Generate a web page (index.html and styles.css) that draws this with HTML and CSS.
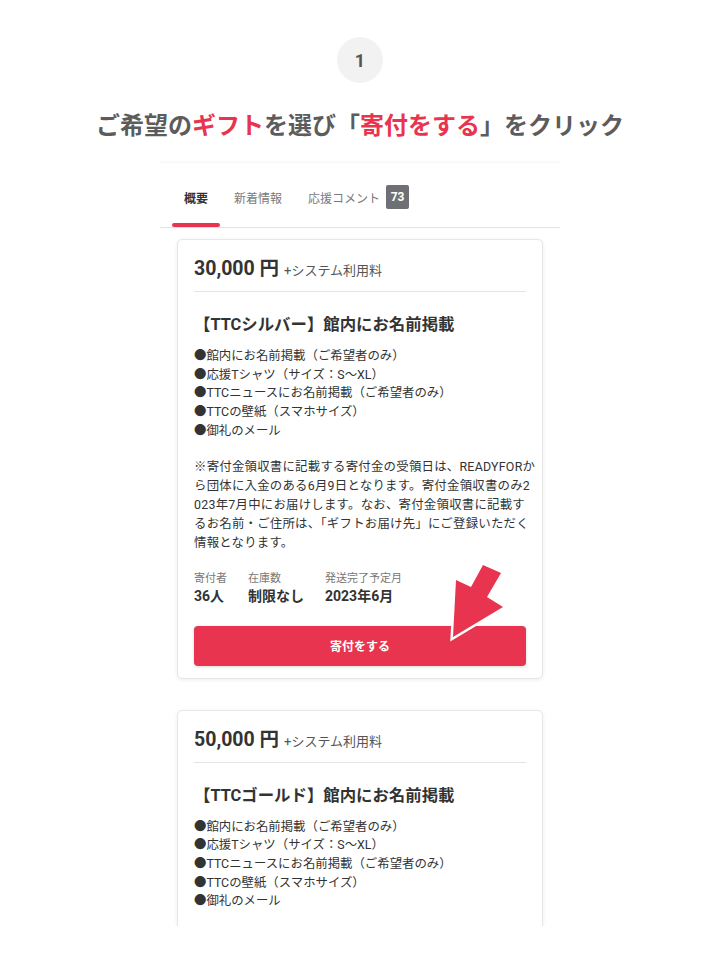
FILE: index.html
```html
<!DOCTYPE html>
<html lang="ja">
<head>
<meta charset="utf-8">
<title>ギフトの選び方</title>
<link rel="stylesheet" href="styles.css">
</head>
<body>
<main class="page">
  <div class="step">1</div>
  <h1 class="headline">ご希望の<span class="red">ギフト</span>を選び「<span class="red">寄付をする</span>」をクリック</h1>

  <section class="shot">
    <div class="shot-top"></div>
    <nav class="tabs">
      <div class="tab active">概要</div>
      <div class="tab">新着情報</div>
      <div class="tab">応援コメント<span class="badge">73</span></div>
    </nav>

    <div class="cards">
      <article class="card">
        <div class="price"><span class="amount">30,000 円</span><span class="fee">+システム利用料</span></div>
        <h2 class="title">【TTCシルバー】館内にお名前掲載</h2>
        <ul class="items">
          <li>●館内にお名前掲載（ご希望者のみ）</li>
          <li>●応援Tシャツ（サイズ：S〜XL）</li>
          <li>●TTCニュースにお名前掲載（ご希望者のみ）</li>
          <li>●TTCの壁紙（スマホサイズ）</li>
          <li>●御礼のメール</li>
        </ul>
        <p class="note">※寄付金領収書に記載する寄付金の受領日は、READYFORか<br>ら団体に入金のある6月9日となります。寄付金領収書のみ2<br>023年7月中にお届けします。なお、寄付金領収書に記載す<br>るお名前・ご住所は、「ギフトお届け先」にご登録いただく<br>情報となります。</p>
        <dl class="stats">
          <div class="stat"><dt>寄付者</dt><dd>36人</dd></div>
          <div class="stat"><dt>在庫数</dt><dd>制限なし</dd></div>
          <div class="stat"><dt>発送完了予定月</dt><dd>2023年6月</dd></div>
        </dl>
        <button class="donate">寄付をする</button>
      </article>

      <article class="card card-clipped">
        <div class="price"><span class="amount">50,000 円</span><span class="fee">+システム利用料</span></div>
        <h2 class="title">【TTCゴールド】館内にお名前掲載</h2>
        <ul class="items">
          <li>●館内にお名前掲載（ご希望者のみ）</li>
          <li>●応援Tシャツ（サイズ：S〜XL）</li>
          <li>●TTCニュースにお名前掲載（ご希望者のみ）</li>
          <li>●TTCの壁紙（スマホサイズ）</li>
          <li>●御礼のメール</li>
        </ul>
      </article>
    </div>

    <svg class="arrow" width="100" height="100" viewBox="0 0 100 100" aria-hidden="true">
      <polygon points="43,10 61,18 47,42 63,52 13,82 16,25 31,32" fill="#e8344e" stroke="#ffffff" stroke-width="5" stroke-linejoin="miter" paint-order="stroke fill"/>
    </svg>
  </section>
</main>
</body>
</html>
```

FILE: styles.css
```css
* { box-sizing: border-box; }

html, body {
  margin: 0;
  padding: 0;
  background: #ffffff;
}

body {
  font-family: "Roboto", "Noto Sans CJK JP", sans-serif;
  color: #333333;
}

.page {
  width: 720px;
  height: 960px;
  overflow: hidden;
  display: flex;
  flex-direction: column;
  align-items: center;
  padding-top: 37px;
}

.step {
  width: 46px;
  height: 46px;
  border-radius: 50%;
  background: #f2f2f2;
  color: #555555;
  font-family: "Roboto", sans-serif;
  font-weight: 700;
  font-size: 18px;
  display: flex;
  align-items: center;
  justify-content: center;
}

.headline {
  margin: 24px 0 0;
  font-family: "Noto Sans CJK JP", sans-serif;
  font-weight: 700;
  font-size: 24px;
  line-height: 34px;
  color: #5c5c5c;
  white-space: nowrap;
}

.red { color: #e8344e; }

.shot {
  position: relative;
  width: 400px;
  height: 766px;
  margin-top: 19px;
  overflow: hidden;
  background: #ffffff;
}

.shot-top {
  height: 1px;
  box-shadow: 0 1px 3px rgba(0, 0, 0, 0.09);
}

.tabs {
  display: flex;
  align-items: center;
  gap: 2px;
  padding: 0 12px;
  height: 67px;
  border-bottom: 1px solid #e2e2e2;
}

.tab {
  position: relative;
  height: 100%;
  display: flex;
  align-items: center;
  padding: 6px 12px 0;
  font-size: 12px;
  color: #7a7a7a;
}

.tab.active {
  color: #333333;
  font-weight: 700;
}

.tab.active::after {
  content: "";
  position: absolute;
  left: 0;
  right: 0;
  bottom: 0;
  height: 4px;
  border-radius: 2px;
  background: #e8344e;
}

.badge {
  margin-left: 6px;
  width: 23px;
  height: 24px;
  border-radius: 2px;
  background: #6f7073;
  color: #ffffff;
  font-weight: 700;
  font-size: 12px;
  display: inline-flex;
  align-items: center;
  justify-content: center;
}

.cards {
  display: flex;
  flex-direction: column;
  gap: 31px;
  padding: 11px 17px 0;
}

.card {
  border: 1px solid #e6e6e6;
  border-radius: 5px;
  box-shadow: 0 1px 4px rgba(0, 0, 0, 0.07);
  padding: 16px 16px 12px;
  background: #ffffff;
}

.card-clipped {
  min-height: 260px;
}

.price {
  display: flex;
  align-items: baseline;
  gap: 5px;
  height: 36px;
  padding-bottom: 10px;
  border-bottom: 1px solid #e4e4e4;
}

.amount {
  font-size: 19.5px;
  font-weight: 700;
  line-height: 25px;
  color: #333333;
}

.fee {
  font-size: 13px;
  color: #555555;
}

.title {
  margin: 21px 0 0;
  font-size: 16.4px;
  line-height: 24px;
  font-weight: 700;
  color: #333333;
}

.items {
  list-style: none;
  margin: 10px 0 0;
  padding: 0;
  font-size: 12.4px;
  line-height: 18.7px;
  color: #333333;
}

.note {
  margin: 16px -14px 0 0;
  font-size: 12.4px;
  letter-spacing: 0.25px;
  line-height: 19.2px;
  color: #333333;
  white-space: nowrap;
}

.stats {
  display: flex;
  gap: 21px;
  margin: 19px 0 0;
}

.stat dt {
  font-size: 11px;
  line-height: 14px;
  color: #777777;
}

.stat dd {
  margin: 0;
  font-size: 14px;
  line-height: 20px;
  font-weight: 700;
  color: #333333;
}

.donate {
  display: block;
  width: 100%;
  height: 40px;
  margin-top: 20px;
  border: none;
  border-radius: 4px;
  background: #e8344e;
  box-shadow: 0 1px 3px rgba(0, 0, 0, 0.15);
  color: #ffffff;
  font-family: "Roboto", "Noto Sans CJK JP", sans-serif;
  font-size: 12px;
  font-weight: 700;
}

.arrow {
  position: absolute;
  left: 280px;
  top: 395px;
}
```
